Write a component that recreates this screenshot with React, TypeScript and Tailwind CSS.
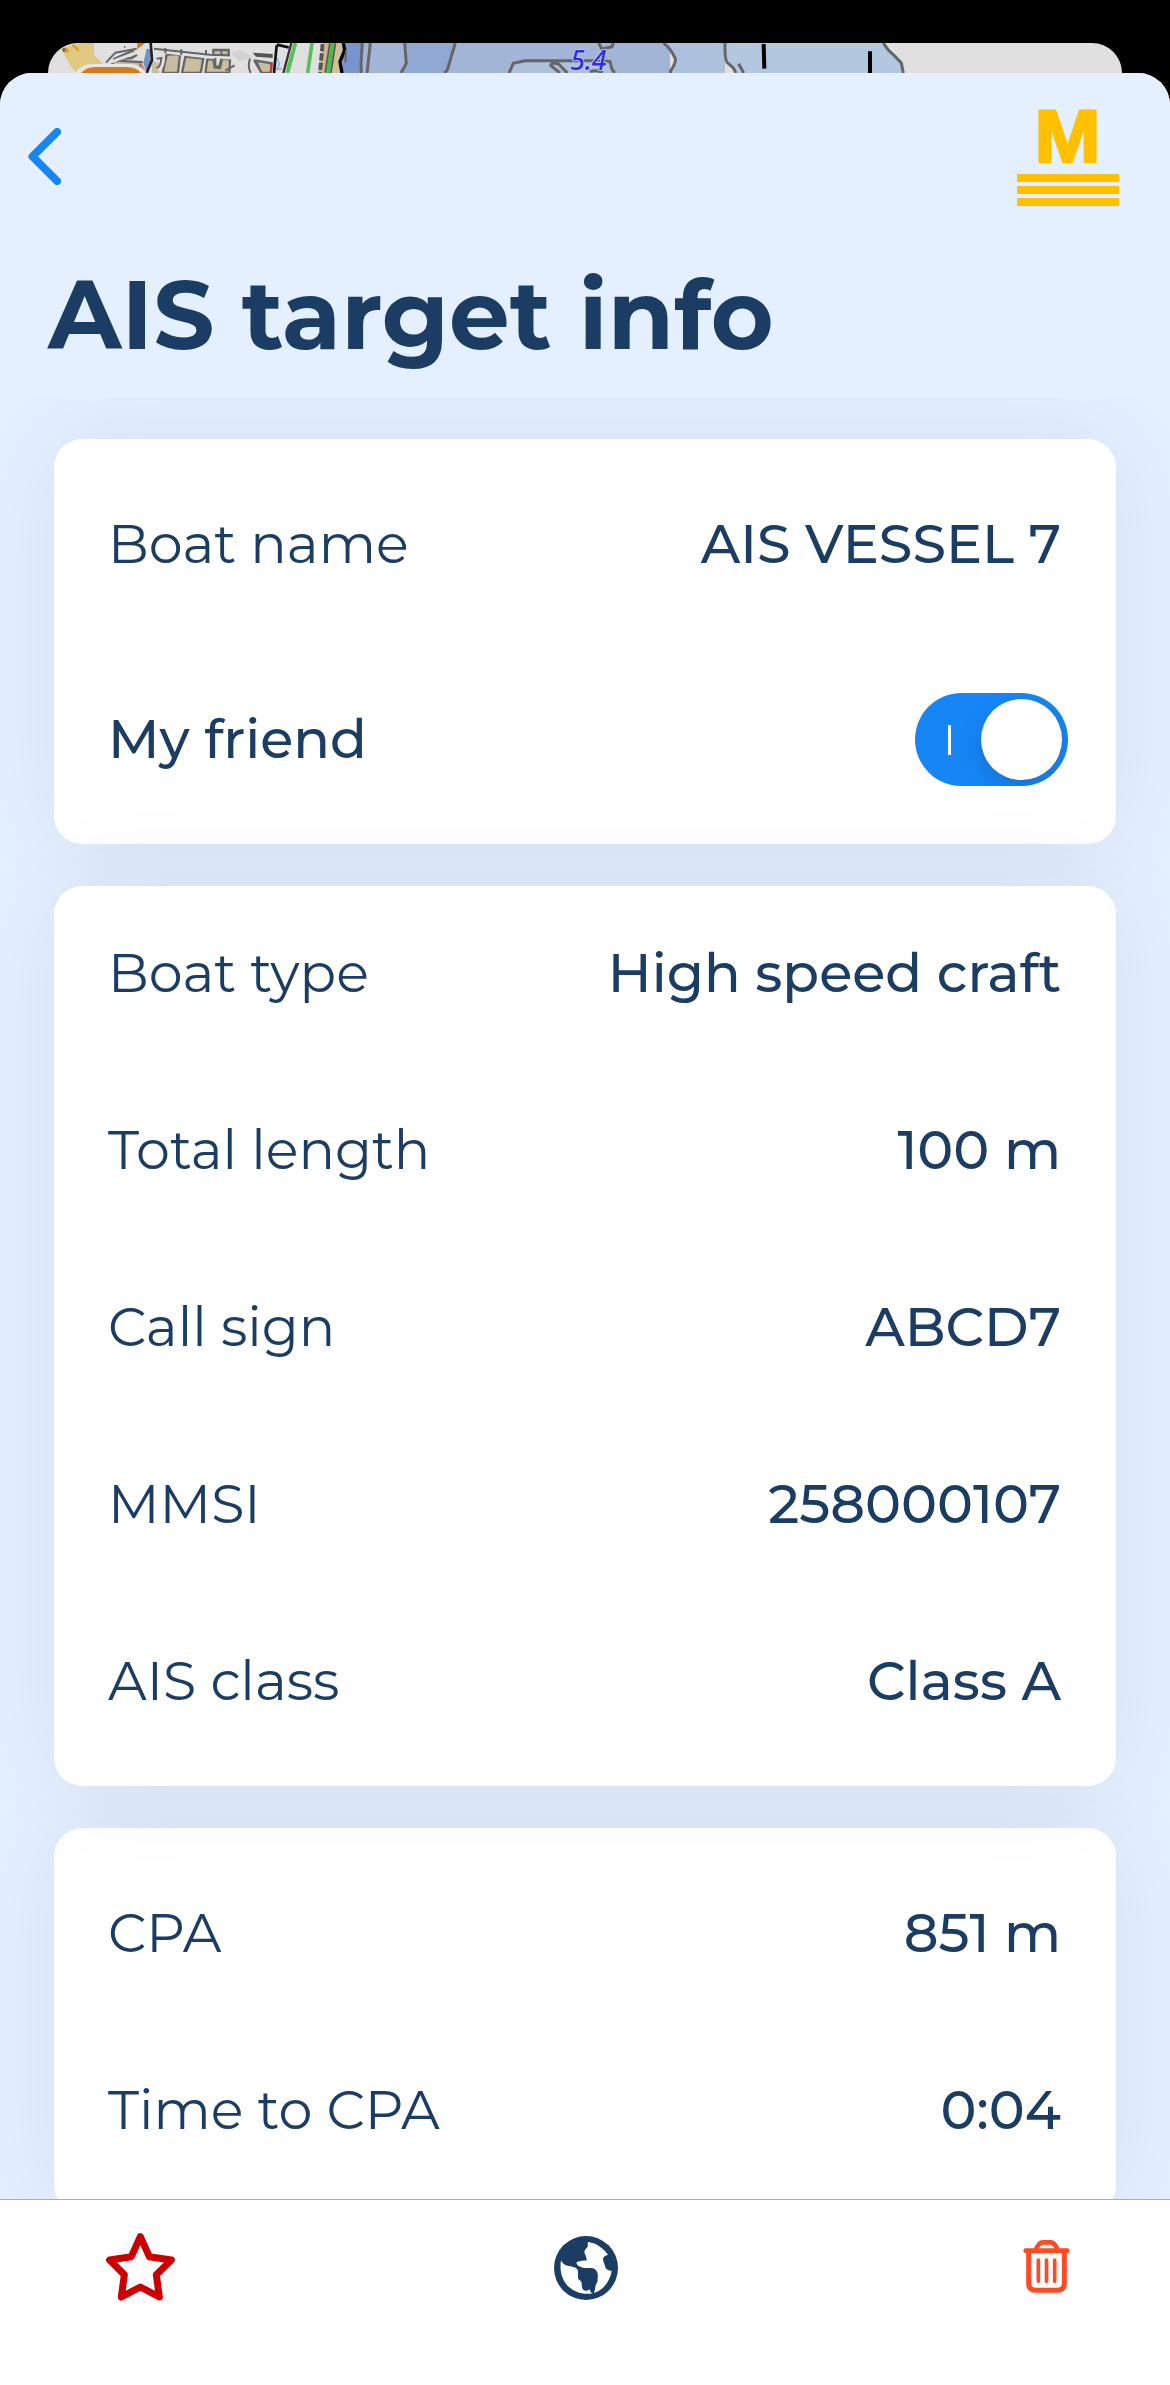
import React, { useState } from 'react';

interface InfoRow {
  label: string;
  value: string;
}

const details: InfoRow[] = [
  { label: 'Boat type', value: 'High speed craft' },
  { label: 'Total length', value: '100 m' },
  { label: 'Call sign', value: 'ABCD7' },
  { label: 'MMSI', value: '258000107' },
  { label: 'AIS class', value: 'Class A' },
];

const approach: InfoRow[] = [
  { label: 'CPA', value: '851 m' },
  { label: 'Time to CPA', value: '0:04' },
];

// Sliver of the chart that peeks out above the sheet
const ChartStrip: React.FC = () => (
  <svg viewBox="144 39 3222 90" preserveAspectRatio="none" className="block h-full w-full">
    <rect x="144" y="39" width="3222" height="90" fill="#e0e0e0" />

    {/* town */}
    <path d="M186 58 200 50 245 39H282V75L312 104 240 129H230Q205 105 186 58Z" fill="#e0c880" />
    <path d="M186 56 198 52 208 62 203 68 190 66Z" fill="#e39a12" />
    <path d="M186 56 196 54 194 66 189 66Z" fill="#666" />
    <path d="M218 44 236 62" stroke="#e39a12" strokeWidth="6" />
    <path d="M412 39H436L412 58Z" fill="#d97a18" />
    <path d="M372 52 376 50" stroke="#444" strokeWidth="4" />
    <g fill="#c8bd9e" stroke="#666" strokeWidth="7">
      <path d="M340 88 398 62 408 76 395 84Z" />
      <path d="M332 104 345 92 424 96 420 112Z" />
      <path d="M500 74 540 72 534 129H488Z" />
      <path d="M556 80 610 86 602 129H546Z" />
      <path d="M622 88 640 88 644 112 660 114 666 86 690 88 688 129H616Z" />
      <path d="M640 60H686V76H640Z" />
      <path d="M768 92 815 100 812 129H784Z" />
      <path d="M456 92 476 100 478 129H456Z" stroke="none" />
    </g>
    <g fill="none" stroke="#e0e0e0" strokeWidth="9">
      <path d="M462 62 630 82 700 84" />
      <path d="M490 80Q492 110 474 120" />
      <path d="M430 60 322 100" />
    </g>
    <g fill="none" stroke="#666" strokeWidth="6">
      <path d="M462 56 630 74 690 76" />
      <path d="M470 86 484 84Q482 112 470 114" />
      <path d="M496 54V70M544 58V74M618 60V76M664 60V76" />
      <path d="M646 84V104Q648 112 658 108L664 86" />
      <path d="M676 122 704 106" />
      <path d="M750 86Q742 110 752 129M762 90Q772 110 786 129" />
      <path d="M318 98 346 68 410 56" />
    </g>
    <path d="M692 70 720 60 756 80 720 96Z" fill="#d2d2d2" />
    <path d="M440 56 452 58 450 110 438 124 430 98Z" fill="#6f92cc" />
    <path d="M420 100 428 129 436 122 426 98Z" fill="#e88070" />
    <path d="M452 39 456 90 440 129" fill="none" stroke="#222" strokeWidth="8" />
    <path d="M758 68 818 72V84L768 80Z" fill="#555" />
    <path d="M830 44 866 52M830 46 822 129" fill="none" stroke="#111" strokeWidth="8" />
    <path d="M814 98V124" stroke="#d83030" strokeWidth="6" />
    <path d="M832 84 838 104 830 118 846 116" fill="none" stroke="#7fa8dd" strokeWidth="4" />
    <path d="M874 39 860 92 850 129" fill="none" stroke="#333" strokeWidth="7" />
    <path d="M886 39 862 129" stroke="#58c05a" strokeWidth="12" />
    <path d="M936 39 923 129" stroke="#58c05a" strokeWidth="11" />
    <path d="M970 39H1028L1020 129H955Z" fill="#cfc096" />
    <path d="M968 42 960 129" stroke="#555" strokeWidth="12" strokeDasharray="22 6" />
    <path d="M980 39 974 129" stroke="#d2b48c" strokeWidth="12" />
    <path d="M998 39 984 129" stroke="#555" strokeWidth="22" />
    <path d="M998 39 984 129" stroke="#4eb94e" strokeWidth="13" />

    {/* water */}
    <path d="M1028 39H1090L1084 129H1026Z" fill="#7895cf" />
    <path d="M1088 39H1215L1222 100 1205 129H1082Z" fill="#a3b5d6" />
    <path d="M1215 39H1366L1342 120 1335 129H1203L1220 100Z" fill="#90a8d2" />
    <path d="M1366 39H2010V129H1335Z" fill="#a3b5d6" />
    <path d="M1527 129 1540 100 1575 92 1810 90 1836 105 1842 129Z" fill="#adc0dc" />
    <path d="M1995 39Q2015 60 2026 90L2010 129H2175V39Z" fill="#adc0dc" />
    <path d="M2175 39H2652L2704 98 2710 129H2205L2182 100Z" fill="#b3c8de" />
    <g fill="none" stroke="#666" strokeWidth="9">
      <path d="M1087 39 1083 100 1084 129M1111 39 1101 129" />
      <path d="M1214 39 1219 100 1203 129" />
      <path d="M1366 39 1342 120 1333 129" />
      <path d="M1527 129 1540 100 1575 92H1810L1830 95 1836 118 1844 129" />
      <path d="M1680 129 1652 106Q1654 96 1676 102L1702 129" />
      <path d="M1796 39 1806 57 1836 50 1840 39" />
      <path d="M1770 125Q1790 118 1808 128" />
      <path d="M1990 39Q2012 54 2026 86 2028 100 2012 122V129" />
      <path d="M2175 39Q2174 90 2182 98L2200 114 2208 129M2216 101 2231 129" />
      <path d="M2650 39Q2664 62 2680 74L2704 99 2710 129" />
    </g>
    <path d="M1030 39 1034 60 1020 95 1026 129" fill="none" stroke="#000" strokeWidth="10" />
    <path d="M1038 60 1036 98" stroke="#666" strokeWidth="6" />
    <path d="M2291 42 2293 116M2610 64V129" stroke="#000" strokeWidth="12" />
    <text
      x="1711"
      y="121"
      fontSize="80"
      textLength="108"
      className="font-['Noto_Sans',sans-serif] font-medium italic"
      fill="#2c2ce2"
      stroke="#c9d2ee"
      strokeWidth="5"
      paintOrder="stroke"
    >
      5.4
    </text>

    {/* map button behind the sheet */}
    <path d="M222 135Q240 102 275 102H390Q425 102 442 135Z" fill="#e6e6e6" />
    <path d="M238 135Q255 111 285 111H382Q412 111 428 135Z" fill="#d97a18" />
  </svg>
);

const Logo: React.FC = () => (
  <div className="flex w-[102px] flex-col items-center">
    <svg viewBox="0 0 60 53" className="block h-[53px] w-[60px] overflow-visible">
      <text
        x="-3.4"
        y="51.2"
        fontSize="74"
        textLength="66"
        lengthAdjust="spacingAndGlyphs"
        className="font-['Liberation_Sans',Arial,sans-serif] font-bold"
        fill="#ffc000"
        stroke="#ffc000"
        strokeWidth="2.5"
        strokeLinejoin="round"
      >
        M
      </text>
    </svg>
    <div className="mt-[10px] flex w-full flex-col gap-1">
      <div className="h-2 bg-[#ffc000]" />
      <div className="h-2 bg-[#ffc000]" />
      <div className="h-2 bg-[#ffc000]" />
    </div>
  </div>
);

const Row: React.FC<InfoRow> = ({ label, value }) => (
  <div className="flex items-center justify-between">
    <span className="font-normal">{label}</span>
    <span className="mr-px font-medium">{value}</span>
  </div>
);

const Toggle: React.FC<{ on: boolean; onChange: () => void }> = ({ on, onChange }) => (
  <button
    role="switch"
    aria-checked={on}
    onClick={onChange}
    className={`-mr-[6px] flex h-[93px] w-[153px] items-center overflow-hidden rounded-full px-[6px] ${on ? 'justify-between bg-[#1686f7]' : 'bg-gray-300'}`}
  >
    {on && <span className="ml-[27px] h-[30px] w-[3px] bg-white" />}
    <span className="size-[81px] rounded-full bg-white shadow-[0_9px_24px_rgba(0,0,0,0.15)]" />
  </button>
);

const StarIcon = () => (
  <svg viewBox="0 0 207 204" className="h-[68px] w-[69px]" fill="none" stroke="#cc0000" strokeWidth="21" strokeLinejoin="round">
    <path d="M103 11 130 71 196 81 151 125 160 192 103 162 46 192 55 125 11 81 76 71Z" />
  </svg>
);

const GlobeIcon = () => (
  <svg viewBox="0 0 192 192" className="size-16">
    <circle cx="96" cy="96" r="96" fill="#1b3d64" />
    <path
      fill="#fff"
      d="M102 18C106 19 117 20 126 25C139 32 153 43 162 56C154 58 148 62 147 68C147 76 152 84 154 94C156 101 164 104 173 105C169 132 150 162 120 171C124 160 124 153 125 147C132 138 131 132 131 124C134 108 124 97 113 96H90C84 94 70 90 68 83C66 78 71 77 77 76C84 74 91 72 97 74C101 65 91 55 91 48C92 40 98 37 101 32C102 28 100 23 102 18Z"
    />
    <path fill="#fff" d="M21 73C24 82 32 87 40 89C51 92 64 91 71 101C74 110 70 121 73 129C78 134 83 136 83 142C83 151 84 158 89 163C94 165 103 165 107 159C107 165 111 170 116 172C62 182 10 142 21 73Z" />
  </svg>
);

const TrashIcon = () => (
  <svg viewBox="0 0 141 159" className="h-[53px] w-[47px]" fill="none" stroke="#ff4a22" strokeLinecap="round" strokeLinejoin="round">
    <path strokeWidth="14" d="M8 32H133" />
    <path strokeWidth="15" d="M17 34V130Q17 151 39 151H102Q124 151 124 130V34" />
    <path strokeWidth="14" d="M38 31Q46 7 60 7H83Q96 7 104 31" />
    <path strokeWidth="11" d="M46 60V124M70.500 60V124M95 60V124" />
  </svg>
);

export default function App() {
  const [friend, setFriend] = useState(true);

  return (
    <div className="flex h-[2385px] w-[1170px] flex-col overflow-hidden bg-black pt-[43px] font-['Montserrat','Inter',sans-serif] text-[#1b3d64]">
      <div className="mx-12 h-[30px] shrink-0 overflow-hidden rounded-t-[30px]">
        <ChartStrip />
      </div>

      <div className="flex min-h-0 flex-1 flex-col overflow-hidden rounded-t-[32px] bg-[#e4f0ff]">
        <header className="relative z-20 h-[324px] shrink-0 bg-[#e4f0ff] pt-[38px]">
          <div className="flex items-start justify-between pr-[51px] pl-7">
            <svg viewBox="0 0 33 57" className="mt-[17px] h-[57px] w-[33px]" fill="none" stroke="#1686f7" strokeWidth="8" strokeLinecap="round" strokeLinejoin="round">
              <path d="M29 4 4.500 28.500 29 53" />
            </svg>
            <Logo />
          </div>
          <h1 className="mt-[50px] pl-12 text-[96px] leading-[117px] font-bold tracking-[0.08px]">AIS target info</h1>
        </header>

        <main className="flex min-h-0 flex-1 flex-col gap-[42px] overflow-hidden px-[54px] pt-[42px] text-[54px] leading-[66px]">
          <section className="flex h-[405px] shrink-0 flex-col gap-[116px] rounded-[28px] bg-white px-[54px] pt-[72px] shadow-[0_0_100px_rgba(25,25,0,0.065)]">
            <Row label="Boat name" value="AIS VESSEL 7" />
            <div className="flex items-center justify-between">
              <span className="-mt-[2px] font-medium">My friend</span>
              <Toggle on={friend} onChange={() => setFriend(!friend)} />
            </div>
          </section>

          {/* sits above its neighbours so its shadow tints both of them */}
          <section className="relative z-10 flex h-[900px] shrink-0 flex-col gap-[111px] rounded-[28px] bg-white px-[54px] pt-[54px] shadow-[0_0_100px_rgba(25,25,0,0.065)]">
            {details.map((row) => (
              <Row key={row.label} {...row} />
            ))}
          </section>

          <section className="flex h-[385px] shrink-0 flex-col gap-[111px] rounded-[28px] bg-white px-[54px] pt-[72px] shadow-[0_0_100px_rgba(25,25,0,0.065)]">
            {approach.map((row) => (
              <Row key={row.label} {...row} />
            ))}
          </section>
        </main>

        <footer className="relative z-20 grid h-[186px] shrink-0 grid-cols-[1fr_auto_1fr] items-start border-t border-[#aeaeb2] bg-white pt-[33px] pr-[100px] pl-[101px]">
          <div className="pl-[5px]">
            <StarIcon />
          </div>
          <div className="mt-[3px]">
            <GlobeIcon />
          </div>
          <div className="mt-[7px] justify-self-end">
            <TrashIcon />
          </div>
        </footer>
      </div>
    </div>
  );
}
